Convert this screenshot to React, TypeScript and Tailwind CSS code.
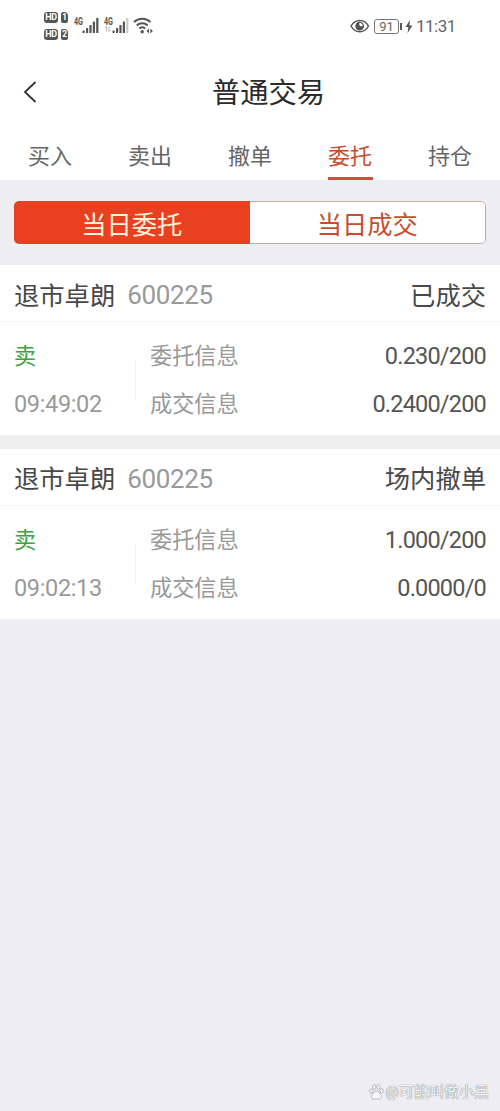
import React, { useState } from 'react';

type Order = {
    name: string;
    code: string;
    status: string;
    time: string;
    entrust: string;
    deal: string;
};

const TABS = ['买入', '卖出', '撤单', '委托', '持仓'];

const ORDERS: Order[] = [
    { name: '退市卓朗', code: '600225', status: '已成交', time: '09:49:02', entrust: '0.230/200', deal: '0.2400/200' },
    { name: '退市卓朗', code: '600225', status: '场内撤单', time: '09:02:13', entrust: '1.000/200', deal: '0.0000/0' },
];

// HD badge with its SIM card number
const HdBadge: React.FC<{ sim: string }> = ({ sim }) => (
    <div className="flex h-[11px] items-center gap-[3px] text-[9px] font-bold leading-[11px] text-white">
        <span className="flex h-[11px] w-[14px] items-center justify-center rounded-[3px] bg-[#555] tracking-[-0.3px]">HD</span>
        <span className="flex h-[11px] w-[7px] items-center justify-center rounded-[2px] rounded-tr-[4px] bg-[#555]">{sim}</span>
    </div>
);

const Signal: React.FC<{ weak?: boolean }> = ({ weak }) => (
    <svg width="27" height="18" viewBox="0 0 27 18" fill="#555">
        <text x="0" y="8.5" fontSize="10" fontWeight="700" textLength="9" lengthAdjust="spacingAndGlyphs">4G</text>
        {weak && <path d="M2.5 10.5v5M1 12L2.5 10.5M5 10.5v5M6.5 14L5 15.5" stroke="#bbb" fill="none" />}
        <rect x="8.5" y="14.5" width="2.2" height="2.5" rx="0.5" />
        <rect x="12" y="12" width="2.2" height="5" rx="0.5" />
        <rect x="15.4" y="9" width="2.2" height="8" rx="0.5" />
        <rect x="18.8" y="5.5" width="2.2" height="11.5" rx="0.5" />
        <rect x="22.2" y="2" width="2.2" height="15" rx="0.5" fill={weak ? '#ccc' : '#555'} />
    </svg>
);

const StatusBar: React.FC = () => (
    <div className="flex h-[52px] items-start justify-between pl-11 pr-[44px]">
        <div className="flex items-start">
            <div className="mt-3 flex flex-col gap-[6px]">
                <HdBadge sim="1" />
                <HdBadge sim="2" />
            </div>
            <div className="ml-[6px] mt-4 flex gap-[3px]">
                <Signal />
                <Signal weak />
                <svg className="-ml-px" width="20" height="19" viewBox="0 0 20 19" fill="none" stroke="#555" strokeWidth="2">
                    <path d="M1 6a12 12 0 0 1 16.5 0" />
                    <path d="M3.7 9.5a8 8 0 0 1 11 0" />
                    <path d="M6.3 12.5a4.5 4.5 0 0 1 5.8 0" />
                    <circle cx="9.2" cy="15.8" r="1.7" fill="#555" stroke="none" />
                    <path d="M16 12.5l-2.5 2.5 2.5 2.5zM17.4 12.5l2.5 2.5-2.5 2.5z" fill="#555" stroke="none" />
                </svg>
            </div>
        </div>
        <div className="mt-4 flex h-5 items-center text-[#666]">
            <svg width="20" height="16" viewBox="0 0 20 16" fill="none" stroke="#555" strokeWidth="1.5">
                <path d="M1 8C5 .5 14.5 .5 18.5 8 14.5 15.5 5 15.5 1 8z" />
                <path d="M9.8 3.8a4.3 4.3 0 1 0 4.2 4.2c0-.5-.1-1-.3-1.500a2.300 2.300 0 1 1-3.200-2.600z" fill="#555" stroke="none" />
                <circle cx="9.8" cy="8" r="3.5" strokeWidth="1.2" />
            </svg>
            <span className="ml-[4px] flex h-[15px] w-[25px] items-center justify-center rounded-[3px] border-[1.5px] border-[#777] text-[13px] leading-none">91</span>
            <span className="ml-px h-[7px] w-[2px] bg-[#555]" />
            <svg className="ml-[3px]" width="8" height="13" viewBox="0 0 8 13" fill="#555">
                <path d="M5 0L.5 7h2.8L2.6 13 7.5 5.6H4.4z" />
            </svg>
            <span className="ml-[3px] w-[40px] whitespace-nowrap text-[17px] leading-5 tracking-[-0.5px]">11:31</span>
        </div>
    </div>
);

const OrderCard: React.FC<{ order: Order }> = ({ order }) => (
    <div className="h-[170px] bg-white">
        <div className="flex h-[57px] items-center justify-between border-b border-[#f5f5f5] px-[14px] pt-[7px] text-[25.3px] text-[#484848]">
            <div className="flex items-center">
                <span>{order.name}</span>
                <span className="-mt-[2px] ml-3 text-[26px] tracking-[-0.35px] text-[#999]">{order.code}</span>
            </div>
            <span>{order.status}</span>
        </div>
        <div className="flex h-[113px] px-[14px] pt-[10px] text-[22.2px] leading-[48px] text-[#999]">
            <div className="w-[121px]">
                <p className="text-[#3aa53f]">卖</p>
                <p className="text-[23.5px] tracking-[-0.35px]">{order.time}</p>
            </div>
            <div className="mt-[28px] h-10 w-px bg-[#f5f5f5]" />
            <div className="ml-[14px] flex-1">
                <p>委托信息</p>
                <p>成交信息</p>
            </div>
            <div className="text-right text-[23.5px] tracking-[-0.8px] text-[#555]">
                <p>{order.entrust}</p>
                <p>{order.deal}</p>
            </div>
        </div>
    </div>
);

const App: React.FC = () => {
    const [tab, setTab] = useState<string>('委托');
    const [showDeals, setShowDeals] = useState<boolean>(false);

    const segment = 'flex flex-1 items-center justify-center pt-[7px]';
    const active = 'bg-[#e94022] text-[#fff3dc]';
    const idle = 'border-y border-r rounded-r-[5px] border-[#c9a8a0] bg-white text-[#c94c2e]';

    return (
        <div className="flex h-[1111px] w-[500px] flex-col overflow-hidden bg-[#eeeef2] font-['Roboto','Noto_Sans_CJK_SC',sans-serif]">
            <div className="h-[180px] bg-white">
                <StatusBar />

                {/* Title bar */}
                <div className="grid h-20 grid-cols-[60px_1fr_23px] items-center">
                    <button className="ml-[23px] w-[14px]" onClick={() => setTab(TABS[0])}>
                        <svg width="14" height="22" viewBox="0 0 14 22" fill="none" stroke="#333" strokeWidth="1.8">
                            <path d="M12.5 1L2 11l10.5 10" />
                        </svg>
                    </button>
                    <h1 className="pt-1 text-center text-[28.3px] leading-10 text-[#2b2b2b]">普通交易</h1>
                </div>

                {/* Trade tabs */}
                <div className="grid h-12 grid-cols-5">
                    {TABS.map((t) => (
                        <button
                            key={t}
                            onClick={() => setTab(t)}
                            className={`mx-auto flex w-[45px] justify-center whitespace-nowrap border-b-3 pt-[8px] text-[22px] leading-[34px] ${
                                t === tab ? 'border-[#c9503a] text-[#c94c2e]' : 'border-transparent text-[#666]'
                            }`}
                        >
                            {t}
                        </button>
                    ))}
                </div>
            </div>

            {/* Orders / deals switch */}
            <div className="mx-[14px] mb-[21px] mt-[21px] flex h-[43px] shrink-0 overflow-hidden rounded-[5px] text-[25.3px]">
                <button className={`${segment} ${showDeals ? idle : active}`} onClick={() => setShowDeals(false)}>当日委托</button>
                <button className={`${segment} ${showDeals ? active : idle}`} onClick={() => setShowDeals(true)}>当日成交</button>
            </div>

            <div className="flex flex-col gap-[13.5px] bg-[#efefef]">
                {ORDERS.map((o) => (
                    <OrderCard key={o.time} order={o} />
                ))}
            </div>

            {/* Watermark */}
            <div className="mb-[7px] mr-[11px] mt-auto flex items-center justify-end text-[15px] leading-6 text-[#f4f4f6] [text-shadow:0_0_1px_#777,0_0_1px_#999]">
                <svg className="mr-[2px]" width="15" height="16" viewBox="0 0 15 16" fill="#f7f7f9" stroke="#aaa" strokeWidth="0.8">
                    <ellipse cx="2.4" cy="7" rx="1.7" ry="2.2" />
                    <ellipse cx="5.3" cy="3" rx="1.7" ry="2.3" />
                    <ellipse cx="9.5" cy="3" rx="1.7" ry="2.3" />
                    <ellipse cx="12.6" cy="7" rx="1.7" ry="2.2" />
                    <path d="M7.5 7c2 0 2.6 2 4 3.3 2 2 .8 5-1.6 4.8-1.6-.2-3.2-.2-4.8 0-2.4.2-3.6-2.8-1.6-4.8C4.9 9 5.5 7 7.5 7z" />
                </svg>
                <span>@可能叫做小黑</span>
            </div>
        </div>
    );
};

export default App;
